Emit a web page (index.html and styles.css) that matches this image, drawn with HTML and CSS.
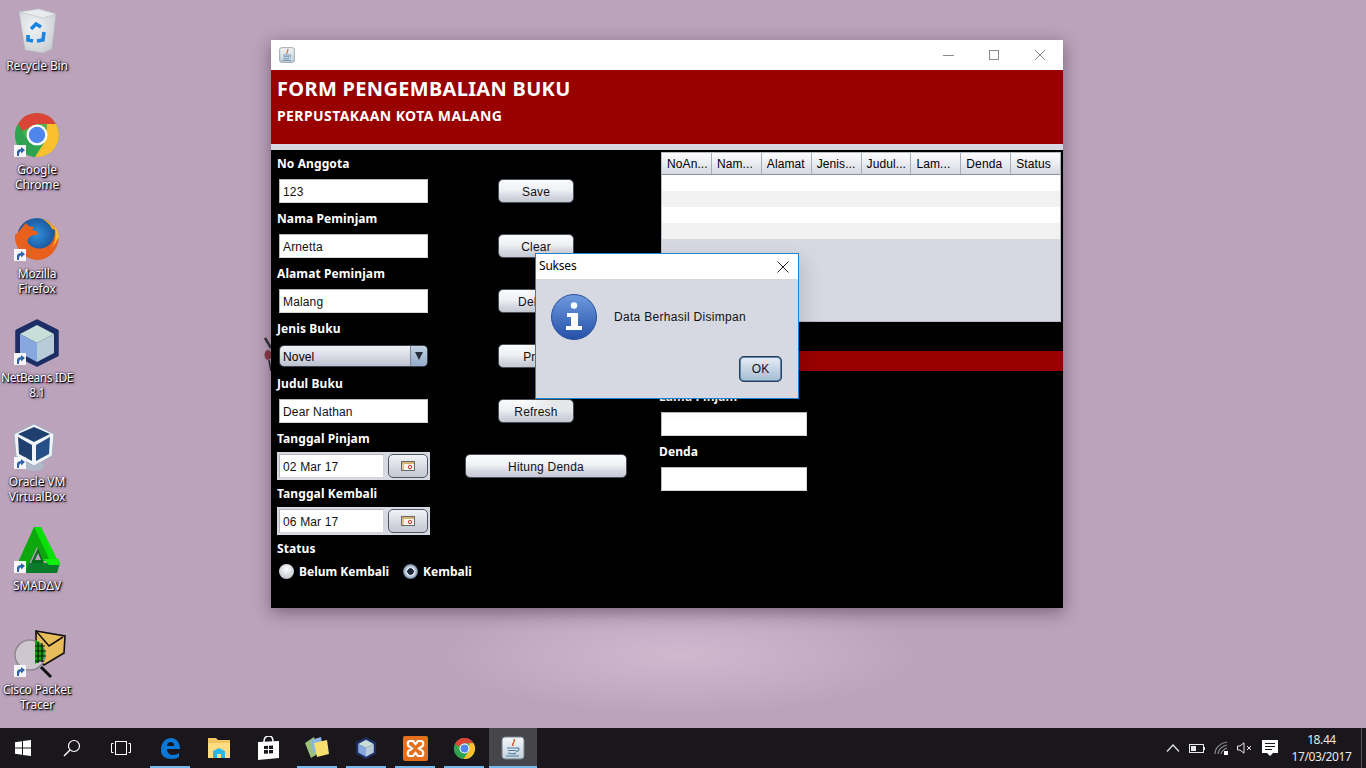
FILE: index.html
```html
<!DOCTYPE html>
<html lang="id">
<head>
<meta charset="utf-8">
<title>Form Pengembalian Buku</title>
<link rel="stylesheet" href="styles.css">
</head>
<body>
<svg class="defs" width="0" height="0" aria-hidden="true">
  <defs>
    <linearGradient id="infoG" x1="0" y1="0" x2="0" y2="1"><stop offset="0" stop-color="#6f9be0"/><stop offset="1" stop-color="#2450a8"/></linearGradient>
    <linearGradient id="javaG" x1="0" y1="0" x2="0" y2="1"><stop offset="0" stop-color="#f4f6f7"/><stop offset="1" stop-color="#c4d2dc"/></linearGradient>
    <radialGradient id="binG" cx=".4" cy=".4" r=".8"><stop offset="0" stop-color="#f2f4f5"/><stop offset="1" stop-color="#c2c8cc"/></radialGradient>
    <radialGradient id="globeG" cx=".5" cy=".4" r=".6"><stop offset="0" stop-color="#2f8fd8"/><stop offset="1" stop-color="#123f86"/></radialGradient>
    <symbol id="chrome" viewBox="0 0 48 48">
      <circle cx="24" cy="24" r="22" fill="#4caf50"/>
      <path d="M24 2A22 22 0 0 1 43 13L24 13 9 20 5 13A22 22 0 0 1 24 2Z" fill="#db4437"/>
      <path d="M43 13A22 22 0 0 1 22 46L33 29 34 13Z" fill="#fbc02d"/>
      <path d="M5 13A22 22 0 0 0 22 46L32 28 14 28Z" fill="#2fa34f"/>
      <circle cx="24" cy="24" r="10.5" fill="#fff"/><circle cx="24" cy="24" r="8.2" fill="#4e86ee"/>
    </symbol>
    <symbol id="cube" viewBox="0 0 48 48">
      <path d="M24 2 44 12V36L24 46 4 36V12Z" fill="#1d2e66" stroke="#1d2e66" stroke-width="3.5" stroke-linejoin="round"/>
      <path d="M24 6 41 15 24 24 7 15Z" fill="#c7ded9"/>
      <path d="M7 15 24 24V43L7 34Z" fill="#86a8df"/>
      <path d="M41 15 24 24V43L41 34Z" fill="#b7cbd8"/>
    </symbol>
    <symbol id="java" viewBox="0 0 24 24">
      <rect x="1" y="1" width="22" height="22" rx="3" fill="url(#javaG)" stroke="#71808c"/>
      <path d="M13 3C15 6 10 7 12 10 11 7 14.500 6.500 13 3Z" fill="#d8541e" stroke="#d8541e"/>
      <path d="M6 12H15M7 14.500H15M7 17C10 18 13 18 15 17M5 20H18M15 12C19 11 19 15 15 15.500" fill="none" stroke="#4e7da3" stroke-width="1.100"/>
    </symbol>
    <symbol id="shortcut" viewBox="0 0 12 12">
      <rect width="12" height="12" fill="#f4f6f8"/>
      <path d="M3 11V7C3 5 5 4 7 4V2L11 5 7 8.500V6.500C5.500 6.500 5 7.500 5 11Z" fill="#2e66a8"/>
    </symbol>
    <symbol id="calendar" viewBox="0 0 14 10">
      <rect x=".5" y=".5" width="13" height="9" fill="#f5f3ee" stroke="#6a6a6a"/>
      <rect x="1" y="1" width="12" height="2" fill="#d6b46c"/>
      <rect x="1" y="3" width="2" height="6" fill="#e0c48a"/>
      <circle cx="9" cy="6" r="1.700" fill="none" stroke="#d8382c"/>
    </symbol>
  </defs>
</svg>
<div class="screen">
  <main class="desktop">
    <ul class="icons">
      <li class="icon"><span class="pic">
        <svg width="48" height="48" viewBox="0 0 48 48"><path d="M6 5 26 2 43 7 39 42 30 46 12 43Z" fill="url(#binG)" stroke="#aeb4b8" stroke-width=".6"/><path d="M6 5 26 2 43 7 30 11Z" fill="#e9ecee" stroke="#b9bec2" stroke-width=".6"/><path d="M18 22 23 17 28 20M31 25 30 33 24 34M20 34 15 33 15 28" fill="none" stroke="#1b83e0" stroke-width="3.600"/></svg>
      </span><span class="name">Recycle Bin</span></li>
      <li class="icon"><span class="pic"><svg width="48" height="48"><use href="#chrome"/></svg><svg class="badge" width="12" height="12"><use href="#shortcut"/></svg></span><span class="name">Google<br>Chrome</span></li>
      <li class="icon"><span class="pic">
        <svg width="48" height="48" viewBox="0 0 48 48"><circle cx="24" cy="23" r="20" fill="url(#globeG)"/><path d="M13 8C9 12 5 18 2 20 1 32 11 45 25 45 35 45 45 36 46 22 45 16 43 12 41 10 43 18 41 26 36 30 29 36 19 34 15 28 13 24 17 20 23 20 25 20 26 17 23 16 19 16 19 14 21 12 17 12 15 11 13 8Z" fill="#e8601d"/><path d="M41 10C44 18 43 30 36 36 42 30 46 22 46 22 45 16 43 12 41 10Z" fill="#f7c52c"/><path d="M29 4C35 5 40 9 43 15L39 14C37 9 33 6 29 4Z" fill="#f5a623"/></svg>
        <svg class="badge" width="12" height="12"><use href="#shortcut"/></svg></span><span class="name">Mozilla<br>Firefox</span></li>
      <li class="icon"><span class="pic"><svg width="48" height="48"><use href="#cube"/></svg><svg class="badge" width="12" height="12"><use href="#shortcut"/></svg></span><span class="name name-tight">NetBeans IDE<br>8.1</span></li>
      <li class="icon"><span class="pic">
        <svg width="48" height="48" viewBox="0 0 48 48"><ellipse cx="21" cy="43" rx="10" ry="5" fill="#aeb9c9"/><path d="M21 1 41 11 39 33 21 43 3 33 1 11Z" fill="#f0f3f7" stroke="#9fb0c4"/><path d="M21 4 37 11 21 19 5 11Z" fill="#1f3f6e"/><path d="M5 14 19 22V38L6 31Z" fill="#1f3f6e"/><path d="M37 14 23 22V38L36 31Z" fill="#254f86"/></svg>
        <svg class="badge" width="12" height="12"><use href="#shortcut"/></svg></span><span class="name">Oracle VM<br>VirtualBox</span></li>
      <li class="icon"><span class="pic">
        <svg width="48" height="48" viewBox="0 0 48 48"><path d="M21 0 2 42 12 46 24 20 30 34 40 34 28 0Z" fill="#0ca80c"/><path d="M21 0H28L47 38H39Z" fill="#08e008"/><path d="M18 36 25 21 31 36Z" fill="#0a6a20"/><path d="M22 33 25 26 28 33Z" fill="#bba3bb"/><path d="M12 46 16 36H47L44 46Z" fill="#087c28"/><path d="M30 32H46L47 38H36Z" fill="#0cf00c"/></svg>
        <svg class="badge" width="12" height="12"><use href="#shortcut"/></svg></span><span class="name">SMADΔV</span></li>
      <li class="icon"><span class="pic">
        <svg width="48" height="48" viewBox="0 0 48 48"><path d="M23 0 52 5 51 22 31 34 23 28Z" fill="#e8bc5a" stroke="#111" stroke-width="1.600"/><path d="M23 0 36 15 50 6" fill="none" stroke="#111" stroke-width="1.500"/><circle cx="17" cy="24" r="15" fill="#cfc6cf" stroke="#8e8890" stroke-width="1.500"/><path d="M22 9A15 15 0 0 1 31 28L22 33Z" fill="#0aa80a"/><path d="M25 11V32M29 12V31M22 15H32M22 20H33M22 25H33M22 30H31" stroke="#111" stroke-width="1.200"/><path d="M28 36 38 46" stroke="#111" stroke-width="3"/></svg>
        <svg class="badge" width="12" height="12"><use href="#shortcut"/></svg></span><span class="name">Cisco Packet<br>Tracer</span></li>
    </ul>

    <svg class="stray-cursor" width="10" height="36" viewBox="0 0 10 36"><path d="M1 1 7 11" stroke="#333" stroke-width="2.500"/><ellipse cx="4" cy="18" rx="3.500" ry="5" fill="#8a3a48"/><path d="M5 23 7 34" stroke="#222" stroke-width="1.500"/></svg>

    <section class="window">
      <header class="titlebar">
        <svg class="app-icon" width="16" height="16"><use href="#java"/></svg>
        <div class="controls">
          <svg width="12" height="12" viewBox="0 0 12 12"><path d="M1 6.500H12" stroke="#8a8a8a"/></svg>
          <svg width="12" height="12" viewBox="0 0 12 12"><rect x="1.500" y="1.500" width="9" height="9" fill="none" stroke="#8a8a8a"/></svg>
          <svg width="12" height="12" viewBox="0 0 12 12"><path d="M1 1 11 11M11 1 1 11" stroke="#8a8a8a"/></svg>
        </div>
      </header>
      <div class="banner">
        <h1>FORM PENGEMBALIAN BUKU</h1>
        <h2>PERPUSTAKAAN KOTA MALANG</h2>
      </div>
      <div class="content">
        <div class="col-form">
          <div class="group"><label>No Anggota</label><div class="field">123</div></div>
          <div class="group"><label>Nama Peminjam</label><div class="field">Arnetta</div></div>
          <div class="group"><label>Alamat Peminjam</label><div class="field">Malang</div></div>
          <div class="group"><label>Jenis Buku</label><div class="combo"><span>Novel</span><span class="combo-arrow"></span></div></div>
          <div class="group"><label>Judul Buku</label><div class="field">Dear Nathan</div></div>
          <div class="group"><label>Tanggal Pinjam</label><div class="date"><div class="field date-field">02 Mar 17</div><div class="date-btn"><svg width="14" height="10"><use href="#calendar"/></svg></div></div></div>
          <div class="group"><label>Tanggal Kembali</label><div class="date"><div class="field date-field">06 Mar 17</div><div class="date-btn"><svg width="14" height="10"><use href="#calendar"/></svg></div></div></div>
          <div class="group"><label>Status</label>
            <div class="radios">
              <span class="radio"><i class="dot"></i>Belum Kembali</span>
              <span class="radio"><i class="dot on"></i>Kembali</span>
            </div>
          </div>
        </div>
        <div class="col-actions">
          <div class="btn">Save</div>
          <div class="btn">Clear</div>
          <div class="btn">Delete</div>
          <div class="btn">Print</div>
          <div class="btn">Refresh</div>
          <div class="btn wide">Hitung Denda</div>
        </div>
        <div class="col-right">
          <div class="table">
            <div class="thead"><span>NoAn...</span><span>Nam...</span><span>Alamat</span><span>Jenis...</span><span>Judul...</span><span>Lam...</span><span>Denda</span><span>Status</span></div>
            <div class="row"></div><div class="row alt"></div><div class="row"></div><div class="row alt"></div>
          </div>
          <div class="stripe"></div>
          <div class="group"><label>Lama Pinjam</label><div class="field short"></div></div>
          <div class="group"><label>Denda</label><div class="field short"></div></div>
        </div>
      </div>
      <div class="dialog">
        <div class="dialog-title"><span>Sukses</span>
          <svg width="12" height="12" viewBox="0 0 12 12"><path d="M.5 .5 11.500 11.500M11.500 .5 .5 11.500" stroke="#222"/></svg>
        </div>
        <div class="dialog-body">
          <svg class="info" width="48" height="48" viewBox="0 0 48 48"><circle cx="24" cy="24" r="22.500" fill="url(#infoG)" stroke="#2a4f9a"/><circle cx="24" cy="12.500" r="3.200" fill="#fff"/><path d="M17 20H28V33H32V37H16V33H21V24H17Z" fill="#fff"/></svg>
          <p>Data Berhasil Disimpan</p>
        </div>
        <div class="dialog-foot"><div class="btn ok">OK</div></div>
      </div>
    </section>
  </main>
  <footer class="taskbar">
    <div class="task-left">
      <div class="tb"><svg width="16" height="16" viewBox="0 0 16 16"><path d="M0 2.300 7 1.300V7.500H0ZM8 1.100 16 0V7.500H8ZM0 8.500H7V14.700L0 13.700ZM8 8.500H16V16L8 14.900Z" fill="#fff"/></svg></div>
      <div class="tb"><svg width="18" height="18" viewBox="0 0 18 18"><circle cx="11" cy="7" r="5.500" fill="none" stroke="#fff" stroke-width="1.200"/><path d="M7 11 1 17" stroke="#fff" stroke-width="1.400"/></svg></div>
      <div class="tb"><svg width="20" height="14" viewBox="0 0 20 14"><rect x="4.500" y=".5" width="11" height="13" fill="none" stroke="#fff"/><path d="M2.500 2.500H.5V11.500H2.500M17.500 2.500H19.500V11.500H17.500" fill="none" stroke="#fff"/></svg></div>
      <div class="tb app open"><svg width="20" height="22" viewBox="0 0 20 22"><path d="M1 13C1 5 6 1 11 1 17 1 20 6 20 12H7C7 16 10 18 13 18 15 18 18 17 19 16V20C17 21 15 22 12 22 5 22 1 19 1 13ZM7 9H14C14 6 13 5 11 5 9 5 7 6 7 9Z" fill="#0a78d7"/></svg></div>
      <div class="tb app"><svg width="22" height="20" viewBox="0 0 22 20"><path d="M0 0H8L10 2H22V20H0Z" fill="#f3c560"/><path d="M0 5H22V20H0Z" fill="#ffdd80"/><path d="M5 20V13L11 10 17 13V20H13V16H9V20Z" fill="#29b6e8"/></svg></div>
      <div class="tb app"><svg width="21" height="24" viewBox="0 0 21 24"><path d="M0 6 21 5V22L0 24Z" fill="#fff"/><path d="M6 6C6 1 9 0 11 0 13 0 15 1 15 6" fill="none" stroke="#fff" stroke-width="1.500"/><path d="M6 10 10 9.700V13H6ZM11 9.700 15 9.500V13H11ZM6 14H10V17.500L6 17.800ZM11 14H15V17.200L11 17.500Z" fill="#1a171c"/></svg></div>
      <div class="tb app open"><svg width="24" height="22" viewBox="0 0 24 22"><path d="M0 6 9 0 14 16 6 21Z" fill="#9cc27a"/><path d="M6 3 16 0 18 12 8 16Z" fill="#8ab4e0"/><path d="M9 6 22 3 24 17 12 20Z" fill="#f6df6c"/></svg></div>
      <div class="tb app open"><svg width="22" height="24"><use href="#cube"/></svg></div>
      <div class="tb app open"><svg width="25" height="25" viewBox="0 0 25 25"><rect width="25" height="25" rx="2" fill="#e2701f"/><path d="M7 5H10L12.500 8 15 5H18C21 5 21 10 18 11L16 12.500 18 14C21 15 21 20 18 20H15L12.500 17 10 20H7C4 20 4 15 7 14L9 12.500 7 11C4 10 4 5 7 5Z" fill="none" stroke="#fff" stroke-width="2.200"/></svg></div>
      <div class="tb app open"><svg width="23" height="23"><use href="#chrome"/></svg></div>
      <div class="tb app open active"><svg width="24" height="24"><use href="#java"/></svg></div>
    </div>
    <div class="tray">
      <svg width="14" height="8" viewBox="0 0 14 8"><path d="M1 7.500 7 1 13 7.500" fill="none" stroke="#e8e8e8" stroke-width="1.200"/></svg>
      <svg width="16" height="9" viewBox="0 0 16 9"><rect x=".5" y=".5" width="14" height="8" fill="none" stroke="#e8e8e8"/><rect x="2" y="2" width="5" height="5" fill="#e8e8e8"/><rect x="15" y="3" width="1" height="3" fill="#e8e8e8"/></svg>
      <svg width="14" height="14" viewBox="0 0 14 14"><path d="M1 13C1 7 6 2 13 1M4 13C4 9 8 5 13 4M7 13C7 11 10 8 13 7" fill="none" stroke="#8f8f8f" stroke-width="1.100"/><rect x="10" y="10" width="4" height="4" fill="#fff"/></svg>
      <svg width="16" height="12" viewBox="0 0 16 12"><path d="M.5 4H3L7 .8V11.200L3 8H.5Z" fill="none" stroke="#e8e8e8"/><path d="M10 4 14 8M14 4 10 8" stroke="#e8e8e8"/></svg>
      <svg width="16" height="17" viewBox="0 0 16 17"><path d="M0 0H16V13H11L8 16 5 13H0Z" fill="#fff"/><path d="M3 3.500H13M3 6.500H13M3 9.500H10" stroke="#1a171c"/></svg>
    </div>
    <div class="clock"><span>18.44</span><span>17/03/2017</span></div>
    <div class="show-desktop"></div>
  </footer>
</div>
</body>
</html>
```
FILE: styles.css
```css
* { box-sizing: border-box; }
html, body { margin: 0; padding: 0; overflow: hidden; }
body { font-family: "Liberation Sans", Arial, sans-serif; font-size: 12px; color: #000; }
.defs { position: absolute; }
.screen { width: 1366px; height: 768px; display: flex; flex-direction: column; }

.desktop {
  flex: 1; min-height: 0; position: relative; padding-top: 7px;
  background: radial-gradient(ellipse 240px 60px at 680px 655px, #cfb9cf 0%, #c5aec5 55%, #bba3bb 100%), #bba3bb;
}
.icons { list-style: none; margin: 0; padding: 0; width: 74px; }
.icon { height: 104px; display: flex; flex-direction: column; align-items: center; }
.pic { position: relative; width: 48px; height: 48px; display: block; }
.pic > svg:first-child { display: block; overflow: visible; }
.badge { position: absolute; left: 1px; bottom: 2px; }
.name {
  margin-top: 3px; font: 12px/15px "Noto Sans", "Liberation Sans", sans-serif; letter-spacing: -.15px;
  color: #fff; text-align: center; white-space: nowrap;
  text-shadow: 1px 1px 1px #000, 0 0 2px #1a1040, 1px 1px 3px #2a1a2a;
}
.name-tight { letter-spacing: -.45px; }
.stray-cursor { position: absolute; left: 264px; top: 337px; }

.window {
  position: absolute; left: 271px; top: 40px; width: 792px; height: 568px;
  display: flex; flex-direction: column; background: #d6d9e2;
  box-shadow: 0 4px 16px rgba(40, 20, 40, .45);
}
.titlebar { height: 30px; background: #fff; display: flex; align-items: center; justify-content: space-between; padding-left: 8px; flex: none; }
.app-icon { margin-top: -1px; }
.controls { display: flex; align-items: center; gap: 34px; padding-right: 17px; }
.controls svg { display: block; }
.banner { height: 74px; background: #990000; color: #fff; padding: 5px 0 0 6px; flex: none; }
.banner h1 { margin: 0; font: bold 20px/28px "Noto Sans", "Liberation Sans", sans-serif; letter-spacing: .32px; white-space: nowrap; }
.banner h2 { margin: 0; font: bold 14px/26px "Noto Sans", "Liberation Sans", sans-serif; letter-spacing: .42px; white-space: nowrap; }
.content { margin-top: 6px; flex: 1; background: #000; display: flex; padding-top: 1px; }
.col-form { width: 194px; padding-left: 6px; flex: none; }
.group { height: 55px; display: flex; flex-direction: column; align-items: flex-start; }
.group label { height: 24px; font: bold 12px/25px "Noto Sans", "Liberation Sans", sans-serif; letter-spacing: .1px; color: #fff; white-space: nowrap; }
.field {
  margin: 4px 0 0 2px; width: 149px; height: 24px; line-height: 24px; padding-left: 3px;
  background: #fff; border: 1px solid #b4b7bd; border-right-color: #d4d6da; border-bottom-color: #d4d6da; font-size: 12px;
  color: #111; letter-spacing: .15px;
}
.field.short { width: 146px; }
.combo {
  margin: 5px 0 0 2px; width: 149px; height: 22px; display: flex; justify-content: space-between; align-items: stretch;
  border-radius: 5px; border: 1px solid #3d4252; overflow: hidden; line-height: 22px; padding-left: 3px;
  background: linear-gradient(#f0f2f6, #d9dce5 50%, #bcc1cf); letter-spacing: .15px;
}
.combo-arrow {
  width: 17px; position: relative;
  background: linear-gradient(#c4d2e2, #93acc8); border-left: 1px solid #7d8aa0;
}
.combo-arrow::after {
  content: ""; position: absolute; left: 4px; top: 6px;
  border-left: 4px solid transparent; border-right: 4px solid transparent; border-top: 8px solid #28303c;
}
.date { margin-top: 2px; width: 153px; height: 28px; background: #d6d9e2; display: flex; align-items: center; padding-left: 2px; gap: 4px; }
.date-field { margin: 0; width: 105px; flex: none; }
.date-btn {
  width: 40px; height: 24px; border: 1px solid #50545f; border-radius: 5px; display: flex; align-items: center; justify-content: center;
  background: linear-gradient(#f2f4f7, #d4d7e0 60%, #c4c8d2);
}
.date-btn svg { display: block; }
.radios { display: flex; align-items: center; gap: 14px; height: 22px; padding-left: 2px; }
.radio { display: flex; align-items: center; gap: 5px; color: #fff; font: bold 12px "Noto Sans", "Liberation Sans", sans-serif; white-space: nowrap; }
.dot { width: 15px; height: 15px; border-radius: 50%; flex: none; background: radial-gradient(circle at 50% 35%, #fff, #c8ccd4 70%, #8a8e98); }
.dot.on { background: radial-gradient(circle, #1e2a3a 0 3px, #e8ecf2 3.500px, #9fb2cc 6px, #47586e 8px); }

.col-actions { width: 162px; flex: none; display: flex; flex-direction: column; gap: 31px; padding-top: 28px; align-items: flex-start; }
.btn {
  width: 76px; height: 24px; margin-left: 33px; line-height: 24px; text-align: center; font-size: 12px; color: #111;
  border: 1px solid #4a4e58; border-radius: 5px; letter-spacing: .2px;
  background: linear-gradient(#fbfcfd, #eef0f4 45%, #d4d7e0 75%, #c6c9d3);
}
.btn.wide { width: 162px; margin-left: 0; }

.col-right { margin-left: 32px; flex: 1; display: flex; flex-direction: column; }
.table { margin: 1px 2px 0 2px; width: 400px; height: 170px; background: #d6d9e2; border: 1px solid #b6bac4; flex: none; }
.thead { display: flex; height: 22px; border-bottom: 1px solid #8f939d; background: linear-gradient(#fdfdfe, #e6e8ee 60%, #d6d9e2); }
.thead span { width: 49.900px; flex: none; line-height: 23px; padding-left: 5px; border-right: 1px solid #a8acb6; white-space: nowrap; overflow: hidden; letter-spacing: .1px; }
.row { height: 16px; background: #fff; }
.row.alt { background: #f2f2f2; }
.stripe { margin: 29px 0 13px -20px; height: 20px; background: #990000; flex: none; }

.dialog {
  position: absolute; left: 264px; top: 213px; width: 264px; height: 146px;
  border: 1px solid #1a83d4; background: #d6d9e2; display: flex; flex-direction: column;
  box-shadow: 6px 6px 18px rgba(0, 0, 0, .12);
}
.dialog-title { height: 25px; background: #fff; display: flex; align-items: center; justify-content: space-between; padding: 0 9px 0 3px; flex: none; font: 12px/22px "Noto Sans", "Liberation Sans", sans-serif; letter-spacing: -.2px; }
.dialog-title span { margin-top: -2px; }
.dialog-title svg { display: block; }
.dialog-body { display: flex; align-items: center; padding: 14px 0 0 14px; gap: 16px; }
.dialog-body p { margin: 0; font-size: 12px; letter-spacing: .3px; color: #111; }
.info { display: block; flex: none; }
.dialog-foot { display: flex; justify-content: flex-end; padding: 15px 16px 0 0; }
.btn.ok {
  margin: 0; width: 43px; height: 26px; line-height: 23px; border: 2px solid #5a86ae; outline: 1px solid #2c3f58; outline-offset: -1px;
  background: linear-gradient(#e4ecf4, #c4d4e4 50%, #a8bed4);
}

.taskbar { height: 40px; flex: none; background: #1a171c; display: flex; align-items: stretch; color: #e8e8e8; }
.task-left { display: flex; gap: 1px; width: 1161px; margin-left: -1px; }
.tb { width: 48px; display: flex; align-items: center; justify-content: center; position: relative; }
.tb svg { display: block; }
.app.open::after { content: ""; position: absolute; left: 4px; right: 4px; bottom: 0; height: 2px; background: #76b9ed; }
.app.active { background: #46454a; }
.app.active::after { left: 0; right: 0; }
.tray { display: flex; align-items: center; gap: 9px; width: 122px; padding-left: 6px; }
.tray svg { display: block; }
.clock { width: 79px; display: flex; flex-direction: column; align-items: center; justify-content: center; font: 12px/17px "Noto Sans", "Liberation Sans", sans-serif; letter-spacing: -.4px; }
.show-desktop { width: 1px; background: #55535a; }
```
